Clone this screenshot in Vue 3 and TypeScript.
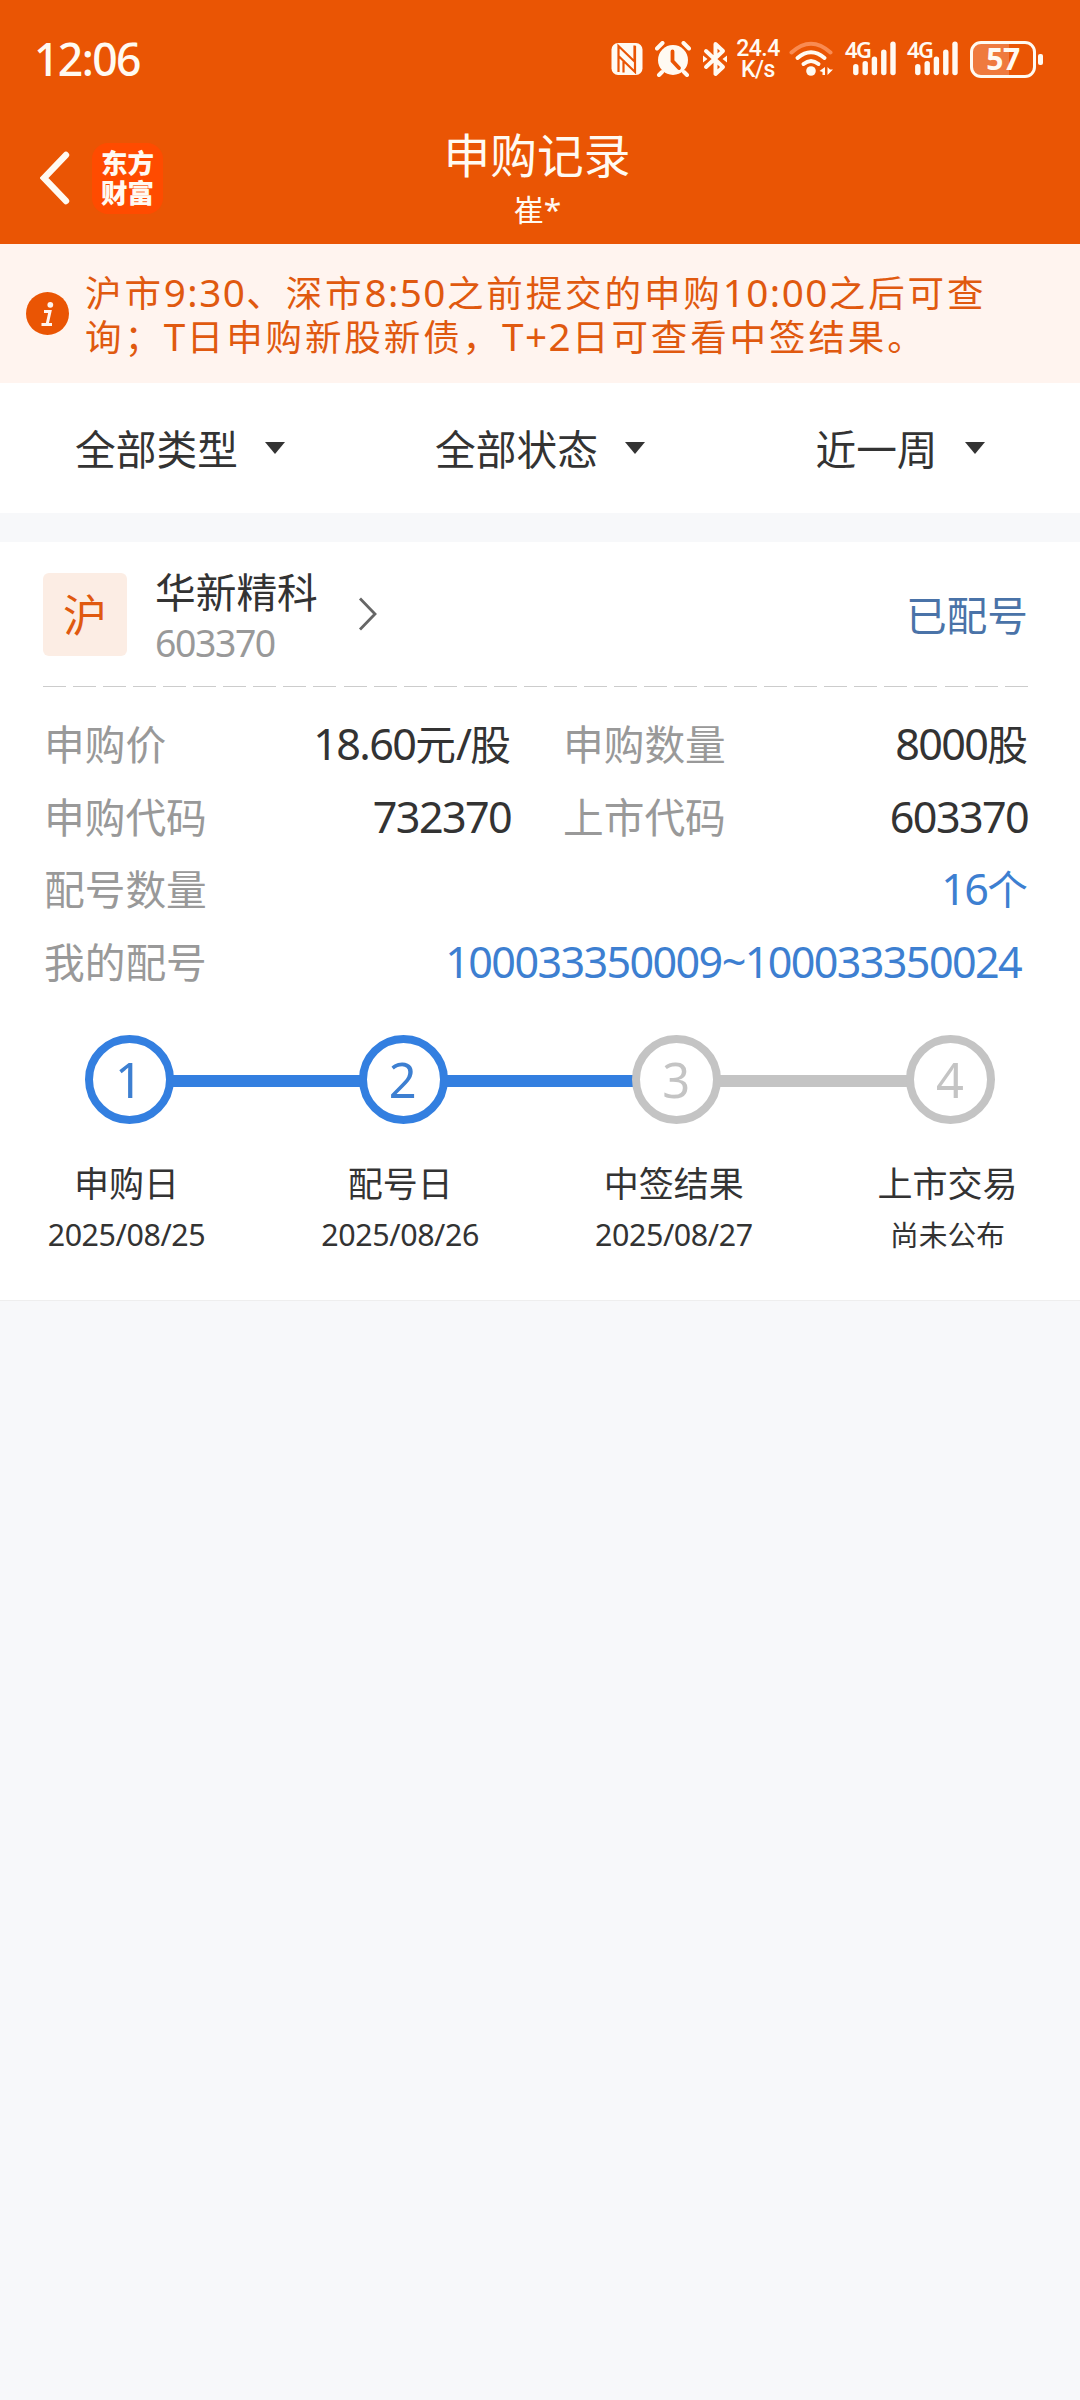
<script setup lang="ts">
import { h, type FunctionalComponent } from 'vue'

interface Step {
  no: number
  title: string
  date: string
  reached: boolean
}

interface Cell {
  label: string
  value: string
}

// Splits mixed text so that Latin runs can carry their own size and tracking.
const Mixed: FunctionalComponent<{ text: string }> = (props) =>
  (props.text.match(/[\x21-\x7e]+|[^\x21-\x7e]+/g) ?? []).map((run) =>
    /^[\x21-\x7e]/.test(run) ? h('span', { class: 'latin-run' }, run) : run,
  )
Mixed.props = ['text']

const notice = [
  '沪市9:30、深市8:50之前提交的申购10:00之后可查',
  '询；T日申购新股新债，T+2日可查看中签结果。',
]
const filters: string[] = ['全部类型', '全部状态', '近一周']
const cells: Cell[] = [
  { label: '申购价', value: '18.60元/股' },
  { label: '申购数量', value: '8000股' },
  { label: '申购代码', value: '732370' },
  { label: '上市代码', value: '603370' },
]
const steps: Step[] = [
  { no: 1, title: '申购日', date: '2025/08/25', reached: true },
  { no: 2, title: '配号日', date: '2025/08/26', reached: true },
  { no: 3, title: '中签结果', date: '2025/08/27', reached: false },
  { no: 4, title: '上市交易', date: '尚未公布', reached: false },
]
const bars = [
  { x: 9, y: 23 },
  { x: 18.4, y: 20 },
  { x: 27.6, y: 15.5 },
  { x: 37, y: 8.5 },
  { x: 46.2, y: 0.5 },
]
</script>

<template>
  <div class="page">
    <header class="header">
      <div class="status">
        <span class="clock">12:06</span>
        <div class="status-icons">
          <svg class="nfc" width="32" height="34" viewBox="0 0 32 34">
            <rect x="0.5" y="1" width="31" height="32" rx="6.500" fill="#fffaf2" />
            <path d="M7.500 30V4L23.500 19.500V3.500M24 4v26L8 14.500M12.500 18v12.500" fill="none" stroke="#ea5504" stroke-width="2.200" />
          </svg>
          <svg class="alarm" width="36" height="36" viewBox="0 0 36 36">
            <circle cx="18" cy="19" r="15" fill="#fffaf2" />
            <path d="M2 7.500L7.500 2M34 7.500L28.500 2M7 31l-3 3M29 31l3 3" stroke="#fffaf2" stroke-width="4" stroke-linecap="round" />
            <path d="M17.500 10.500v9.500l6.500 7" fill="none" stroke="#ea5504" stroke-width="3.800" stroke-linecap="round" />
          </svg>
          <svg class="bt" width="26" height="36" viewBox="0 0 26 36">
            <path d="M4 10l17 16-7.500 7V3L21 10 4 26" fill="none" stroke="#fffaf2" stroke-width="4" stroke-linejoin="round" stroke-linecap="round" />
            <path d="M1 14.500l4.500 3.500L1 21.500zM25 14.500L20.500 18l4.500 3.500z" fill="#fffaf2" />
          </svg>
          <span class="speed"><span>24.4</span><span>K/s</span></span>
          <svg class="wifi" width="46" height="36" viewBox="0 0 46 36">
            <path d="M2.500 11.500Q22 -6 41.500 11.500" fill="none" stroke="#f98b52" stroke-width="4" stroke-linecap="round" />
            <path d="M8.500 17Q22 5.500 35.500 17M14.500 23Q22 17 29.500 23" fill="none" stroke="#fffaf2" stroke-width="4" stroke-linecap="round" />
            <circle cx="22" cy="30" r="4.800" fill="#fffaf2" />
            <path d="M36 26v8h-2.500v-3L30.500 30zM38.500 26v8l5.500-5.500h-3z" fill="#fffaf2" />
          </svg>
          <span v-for="n in 2" :key="n" class="signal">
            <svg width="50" height="36" viewBox="0 0 50 36">
              <rect v-for="b in bars" :key="b.x" :x="b.x - 1.900" :y="b.y" width="5.400" :height="34.200 - b.y" rx="2.700" fill="#fffaf2" />
            </svg>
            <span class="net">4G</span>
          </span>
          <span class="battery"><span class="level">57</span></span>
        </div>
      </div>
      <div class="nav">
        <div class="nav-side">
          <svg width="30" height="54" viewBox="0 0 30 54">
            <path d="M26 4L4 27l22 23" fill="none" stroke="#fffaf2" stroke-width="6.400" stroke-linecap="round" stroke-linejoin="miter" />
          </svg>
          <div class="logo"><span>东方</span><span>财富</span></div>
        </div>
        <div class="titles">
          <h1>申购记录</h1>
          <p><Mixed text="崔*" /></p>
        </div>
        <div class="nav-side end"></div>
      </div>
    </header>

    <section class="notice">
      <svg class="info" width="43" height="43" viewBox="0 0 43 43">
        <circle cx="21.500" cy="21.500" r="21.500" fill="#ea5504" />
        <circle cx="24.300" cy="12.800" r="2.900" fill="#fff4ef" />
        <path d="M18 19.500h6l-2.800 12.500M15.500 32.500h10.500" fill="none" stroke="#fff4ef" stroke-width="3" />
      </svg>
      <div class="notice-text">
        <p v-for="line in notice" :key="line"><Mixed :text="line" /></p>
      </div>
    </section>

    <nav class="filters">
      <div v-for="f in filters" :key="f" class="filter">
        <span class="filter-name">{{ f }}</span>
        <i class="caret"></i>
      </div>
    </nav>

    <article class="card">
      <div class="stock">
        <span class="market">沪</span>
        <div class="stock-id">
          <span class="name">华新精科</span>
          <span class="code"><Mixed text="603370" /></span>
        </div>
        <svg class="more" width="20" height="34" viewBox="0 0 20 34">
          <path d="M2 1.500L17 17 2 32.500" fill="none" stroke="#666" stroke-width="2.800" />
        </svg>
        <span class="state">已配号</span>
      </div>
      <div class="dashes"></div>

      <div class="grid">
        <div v-for="c in cells" :key="c.label" class="cell">
          <span class="label">{{ c.label }}</span>
          <span class="value"><Mixed :text="c.value" /></span>
        </div>
        <div class="cell wide">
          <span class="label">配号数量</span>
          <span class="value link"><Mixed text="16个" /></span>
        </div>
        <div class="cell wide">
          <span class="label">我的配号</span>
          <span class="value link range"><Mixed text="100033350009~100033350024" /></span>
        </div>
      </div>

      <div class="track">
        <template v-for="(s, i) in steps" :key="s.no">
          <span v-if="i > 0" class="line" :class="{ on: steps[i - 1].reached }"></span>
          <span class="dot" :class="{ on: s.reached }"><Mixed :text="String(s.no)" /></span>
        </template>
      </div>
      <div class="captions">
        <div v-for="s in steps" :key="s.no" class="caption">
          <span class="cap-title">{{ s.title }}</span>
          <span class="cap-date"><Mixed :text="s.date" /></span>
        </div>
      </div>
    </article>
  </div>
</template>

<style>
body {
  background: #f7f8fa;
}
.latin-run {
  font-size: 1.06em;
  line-height: 0;
  letter-spacing: calc(var(--track, 0px) - 0.038em);
}
</style>

<style scoped>
.page {
  width: 1080px;
  min-height: 2400px;
  background: #f7f8fa;
  color: #333;
  font-family: 'Noto Sans', 'Noto Sans CJK SC', sans-serif;
  font-size: 40.700px;
  line-height: 1;
}
h1,
p {
  margin: 0;
  font-weight: 400;
}
.header {
  height: 244px;
  background: #ea5504;
  color: #fffaf2;
}
.status {
  display: flex;
  justify-content: space-between;
  align-items: center;
  height: 118px;
  padding: 0 44px 0 34px;
}
.clock {
  font-size: 44.5px;
  font-weight: 500;
  letter-spacing: -1.6px;
}
.status-icons {
  display: flex;
  align-items: center;
  height: 38px;
}
.alarm {
  margin-left: 12px;
}
.bt {
  margin-left: 11px;
}
.speed {
  display: flex;
  flex-direction: column;
  align-items: center;
  width: 46px;
  margin-left: 7px;
  font-family: Roboto, sans-serif;
  font-size: 23px;
  font-weight: 500;
  line-height: 21.5px;
  letter-spacing: -0.5px;
}
.wifi {
  margin-left: 8px;
}
.signal {
  position: relative;
  width: 50px;
  height: 36px;
  margin-left: 11px;
}
.signal + .signal {
  margin-left: 12px;
}
.net {
  position: absolute;
  left: -1px;
  top: -3px;
  font-size: 22px;
  font-weight: 600;
  line-height: 22px;
  letter-spacing: -1.5px;
}
.battery {
  position: relative;
  box-sizing: border-box;
  width: 66px;
  height: 37px;
  margin-left: 12px;
  border: 3px solid #fffaf2;
  border-radius: 11px;
  background: linear-gradient(90deg, #ef7a3e 36px, transparent 36px);
}
.battery::after {
  content: '';
  position: absolute;
  right: -9.500px;
  top: 10px;
  width: 4.500px;
  height: 11px;
  border-radius: 2px;
  background: #fffaf2;
}
.level {
  display: block;
  font-size: 30px;
  font-weight: 700;
  line-height: 30px;
  text-align: center;
  letter-spacing: -0.5px;
}
.nav {
  display: flex;
  height: 126px;
}
.nav-side {
  display: flex;
  align-items: center;
  width: 377px;
  height: 120px;
  padding-left: 40px;
}
.nav-side.end {
  padding: 0;
}
.logo {
  display: flex;
  flex-direction: column;
  align-items: center;
  justify-content: center;
  box-sizing: border-box;
  width: 71px;
  height: 71px;
  padding-bottom: 3px;
  margin-left: 22px;
  border-radius: 16px;
  background: #ff4b00;
  font-family: 'Noto Sans CJK SC', sans-serif;
  font-size: 26.5px;
  font-weight: 900;
  line-height: 30px;
}
.titles {
  width: 240px;
  padding-top: 9px;
  text-align: center;
}
.titles h1 {
  font-size: 46.7px;
  line-height: 56px;
}
.titles p {
  font-size: 30px;
  line-height: 36px;
  margin-top: 9px;
}
.notice {
  display: flex;
  height: 139px;
  padding-left: 26px;
  background: #fff4ef;
  color: #e0590f;
}
.info {
  margin: 48px 16px 0 0;
}
.notice-text {
  --track: 2.900px;
  padding-top: 27px;
  font-size: 36.500px;
  letter-spacing: var(--track);
}
.notice-text p {
  line-height: 44.300px;
  white-space: nowrap;
}
.filters {
  display: flex;
  height: 130px;
  background: #fff;
}
.filter {
  flex: 1;
  display: flex;
  align-items: center;
  justify-content: center;
  gap: 27px;
}
.filter-name {
  padding-top: 2px;
}
.caret {
  border: 10.500px solid transparent;
  border-top: 12px solid #333;
  border-bottom: 0;
}
.card {
  box-sizing: border-box;
  height: 759px;
  margin-top: 29px;
  border-bottom: 1px solid #eee;
  background: #fff;
}
.stock {
  display: flex;
  align-items: center;
  height: 144px;
  padding: 0 52px 0 43px;
}
.market {
  width: 84px;
  height: 83px;
  border-radius: 6px;
  background: #fcede4;
  color: #e0590f;
  font-size: 44px;
  line-height: 84px;
  text-align: center;
}
.stock-id {
  display: flex;
  flex-direction: column;
  padding-top: 6px;
  margin-left: 28px;
}
.name {
  line-height: 52px;
}
.code {
  font-size: 35.300px;
  line-height: 50px;
  color: #999;
}
.more {
  margin-left: 40px;
}
.state {
  padding-top: 2px;
  margin-left: auto;
  color: #4a73a8;
}
.dashes {
  height: 1px;
  margin: 0 51px 0 43px;
  background: repeating-linear-gradient(90deg, #ccc 0 23px, transparent 23px 30.050px);
}
.grid {
  display: grid;
  grid-template-columns: 467px 465px;
  column-gap: 52px;
  padding: 21px 51px 0 44px;
}
.cell {
  display: flex;
  justify-content: space-between;
  align-items: center;
  height: 72.700px;
}
.wide {
  grid-column: 1 / 3;
}
.label {
  color: #999;
}
.link {
  color: #3d7fd1;
}
.range {
  padding-right: 7px;
}
.track {
  display: flex;
  align-items: center;
  height: 89px;
  margin: 36px 85px 0;
}
.dot {
  box-sizing: border-box;
  flex: none;
  width: 89px;
  height: 89px;
  padding-right: 3px;
  border: 8.500px solid #c4c4c4;
  border-radius: 50%;
  background: #fff;
  color: #c4c4c4;
  font-size: 46px;
  line-height: 75px;
  text-align: center;
}
.dot.on {
  border-color: #337fe0;
  color: #3d7fd1;
}
.line {
  flex: 1;
  height: 12px;
  margin: 3px -2px 0;
  background: #c4c4c4;
}
.line.on {
  background: #337fe0;
}
.captions {
  display: flex;
  justify-content: space-between;
  padding: 35px 45px 0 39px;
}
.caption {
  display: flex;
  flex-direction: column;
  align-items: center;
  width: 175px;
}
.cap-title {
  font-size: 35px;
  line-height: 50px;
}
.cap-date {
  --track: 0.750px;
  font-size: 28.700px;
  line-height: 51px;
}
</style>
